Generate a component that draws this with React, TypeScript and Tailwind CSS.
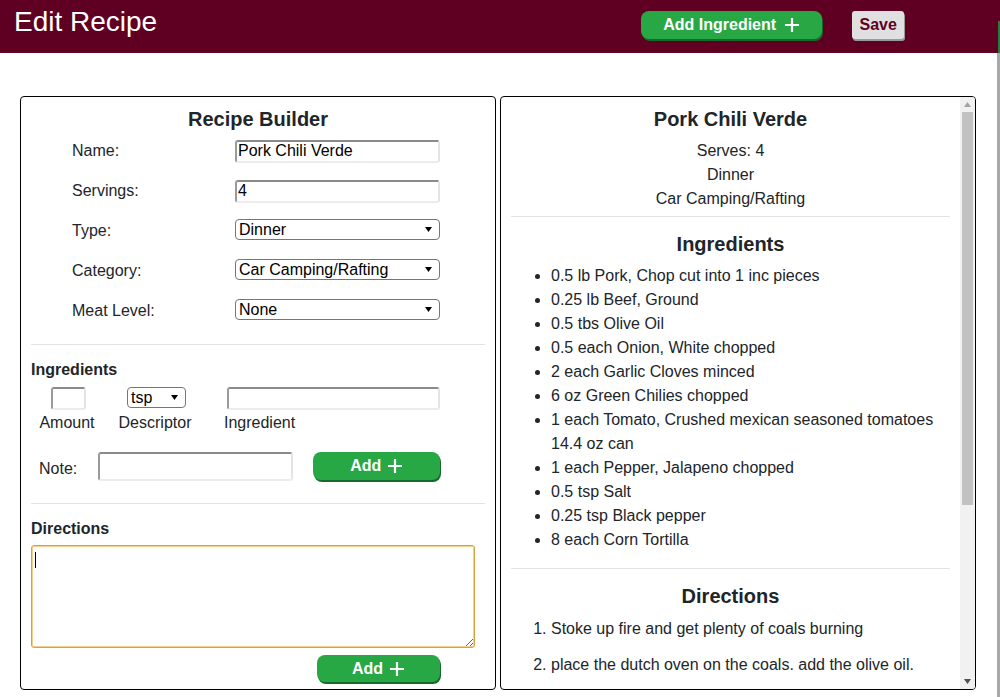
import React from 'react';

const font = { fontFamily: '"Liberation Sans", Arial, sans-serif' };

const Plus = ({ size = 16 }: { size?: number }) => (
  <svg width={size} height={size} viewBox="0 0 16 16" className="inline-block">
    <path d="M8 1v14M1 8h14" stroke="white" strokeWidth="2.2" fill="none" />
  </svg>
);

const Caret = ({ dir = 'down', color = 'black' }: { dir?: 'up' | 'down'; color?: string }) => (
  <svg width="7" height="5" viewBox="0 0 7 5" className="block">
    <path d={dir === 'down' ? 'M0 0h7L3.5 5z' : 'M0 5h7L3.5 0z'} fill={color} />
  </svg>
);

const GreenButton = ({ label, className }: { label: string; className: string }) => (
  <button
    className={`flex items-center justify-center gap-[6px] bg-[#28a745] text-white font-bold text-[16px] rounded-[8px] shadow-[1px_2px_0_#17692b] ${className}`}
  >
    <span>{label}</span>
    <Plus />
  </button>
);

const insetInput =
  'bg-white border-2 border-t-[#8a8a8a] border-l-[#9a9a9a] border-b-[#ececec] border-r-[#e4e4e4] rounded-[3px] text-[16px] text-black px-px outline-none';

// looks like a plain chromium select
const FakeSelect = ({ value, className }: { value: string; className: string }) => (
  <div
    className={`flex items-center justify-between bg-white border border-[#767676] rounded-[4px] text-[16px] leading-[19px] text-black pl-[3px] pr-[7px] ${className}`}
  >
    <span>{value}</span>
    <Caret />
  </div>
);

const ingredients = [
  '0.5 lb Pork, Chop cut into 1 inc pieces',
  '0.25 lb Beef, Ground',
  '0.5 tbs Olive Oil',
  '0.5 each Onion, White chopped',
  '2 each Garlic Cloves minced',
  '6 oz Green Chilies chopped',
  '1 each Tomato, Crushed mexican seasoned tomatoes 14.4 oz can',
  '1 each Pepper, Jalapeno chopped',
  '0.5 tsp Salt',
  '0.25 tsp Black pepper',
  '8 each Corn Tortilla',
];

const directions = [
  'Stoke up fire and get plenty of coals burning',
  'place the dutch oven on the coals. add the olive oil.',
];

const FormRow = ({ label, children }: { label: string; children: React.ReactNode }) => (
  <div className="grid grid-cols-[163px_205px] items-center h-10 pl-[41px]">
    <span>{label}</span>
    {children}
  </div>
);

export default function App() {
  return (
    <div className="relative min-h-[697px] bg-white text-[#212529] text-[16px]" style={font}>
      {/* header */}
      <header className="flex items-start h-[53px] bg-[#5f0023]">
        <h1 className="text-white text-[28px] leading-[32px] pl-[14px] pt-[6px]">Edit Recipe</h1>
        <GreenButton label="Add Ingredient" className="ml-[484px] mt-[11px] w-[181px] h-[28px] gap-[8px]" />
        <button className="ml-[30px] mt-[11px] w-[52px] h-[28px] bg-[#e0e0e0] rounded-[3px] shadow-[1px_2px_0_#9a9a9a] text-[#5f0023] font-bold text-[16px]">
          Save
        </button>
      </header>

      {/* window edge bits */}
      <div className="absolute right-0 top-[21px] h-[32px] w-[2px] bg-[#2d7a3d]" />
      <div className="absolute right-0 top-[53px] bottom-0 w-[3px] bg-[#a9a9a9]" />

      <main className="flex gap-[4px] pt-[43px] pl-[20px]">
        {/* builder */}
        <section className="w-[476px] h-[594px] border border-black rounded-[4px] px-[10px] pt-[10px]">
          <h2 className="text-center font-bold text-[20px] leading-[24px]">Recipe Builder</h2>
          <FormRow label="Name:">
            <input className={`${insetInput} h-[23px]`} defaultValue="Pork Chili Verde" />
          </FormRow>
          <FormRow label="Servings:">
            <input className={`${insetInput} h-[23px]`} defaultValue="4" />
          </FormRow>
          <FormRow label="Type:">
            <FakeSelect value="Dinner" className="h-[21px] mb-[4px]" />
          </FormRow>
          <FormRow label="Category:">
            <FakeSelect value="Car Camping/Rafting" className="h-[21px] mb-[4px]" />
          </FormRow>
          <FormRow label="Meat Level:">
            <FakeSelect value="None" className="h-[21px] mb-[4px]" />
          </FormRow>

          <div className="border-t border-[#e3e3e3] mt-[13px]" />

          <h3 className="font-bold leading-[24px] mt-[13px]">Ingredients</h3>
          <div className="flex items-start mt-[5px] h-[23px]">
            <input className={`${insetInput} ml-[20px] w-[35px] h-[23px]`} />
            <FakeSelect value="tsp" className="ml-[41px] w-[59px] h-[21px]" />
            <input className={`${insetInput} ml-[41px] w-[213px] h-[23px]`} />
          </div>
          <div className="flex leading-[24px] mt-px">
            <span className="w-[72px] text-center">Amount</span>
            <span className="ml-[4px] w-[96px] text-center">Descriptor</span>
            <span className="ml-[21px]">Ingredient</span>
          </div>
          <div className="flex items-center mt-[16px] h-[30px]">
            <span className="ml-[8px] pt-[6px]">Note:</span>
            <input className={`${insetInput} ml-[21px] w-[195px] h-[29px]`} />
            <GreenButton label="Add" className="ml-[20px] w-[127px] h-[28px]" />
          </div>

          <div className="border-t border-[#e3e3e3] mt-[22px]" />

          <h3 className="font-bold leading-[24px] mt-[13px]">Directions</h3>
          <div className="relative mt-[4px] w-[444px] h-[103px]">
            <textarea className="block w-full h-full bg-white border border-[#d9a23f] shadow-[inset_0_0_0_1px_#f3d08e] rounded-[3px] outline-none" />
            <span className="absolute left-[4px] top-[7px] w-px h-[16px] bg-black" />
          </div>
          <GreenButton label="Add" className="ml-[286px] mt-[7px] w-[123px] h-[27px]" />
        </section>

        {/* preview */}
        <section className="flex w-[476px] h-[594px] border border-black rounded-[4px] overflow-hidden">
          <div className="flex-1 min-w-0 px-[10px] pt-[10px]">
            <h2 className="text-center font-bold text-[20px] leading-[24px]">Pork Chili Verde</h2>
            <div className="text-center leading-[24px] mt-[8px]">
              <p>Serves: 4</p>
              <p>Dinner</p>
              <p>Car Camping/Rafting</p>
            </div>
            <div className="border-t border-[#e3e3e3] mt-[5px]" />
            <h2 className="text-center font-bold text-[20px] leading-[24px] mt-[15px]">Ingredients</h2>
            <ul className="list-disc pl-[40px] leading-[24px] mt-[8px]">
              {ingredients.map((i) => (
                <li key={i}>{i}</li>
              ))}
            </ul>
            <div className="border-t border-[#e3e3e3] mt-[16px]" />
            <h2 className="text-center font-bold text-[20px] leading-[24px] mt-[15px]">Directions</h2>
            <ol className="list-decimal pl-[40px] leading-[24px] mt-[9px] flex flex-col gap-[12px]">
              {directions.map((d) => (
                <li key={d}>{d}</li>
              ))}
            </ol>
          </div>
          {/* scrollbar */}
          <div className="flex flex-col w-[15px] bg-[#f1f1f1]">
            <div className="flex items-center justify-center h-[15px]">
              <Caret dir="up" color="#a3a3a3" />
            </div>
            <div className="mx-[2px] h-[393px] bg-[#c1c1c1]" />
            <div className="flex-1" />
            <div className="flex items-center justify-center h-[15px]">
              <Caret dir="down" color="#505050" />
            </div>
          </div>
        </section>
      </main>
    </div>
  );
}
